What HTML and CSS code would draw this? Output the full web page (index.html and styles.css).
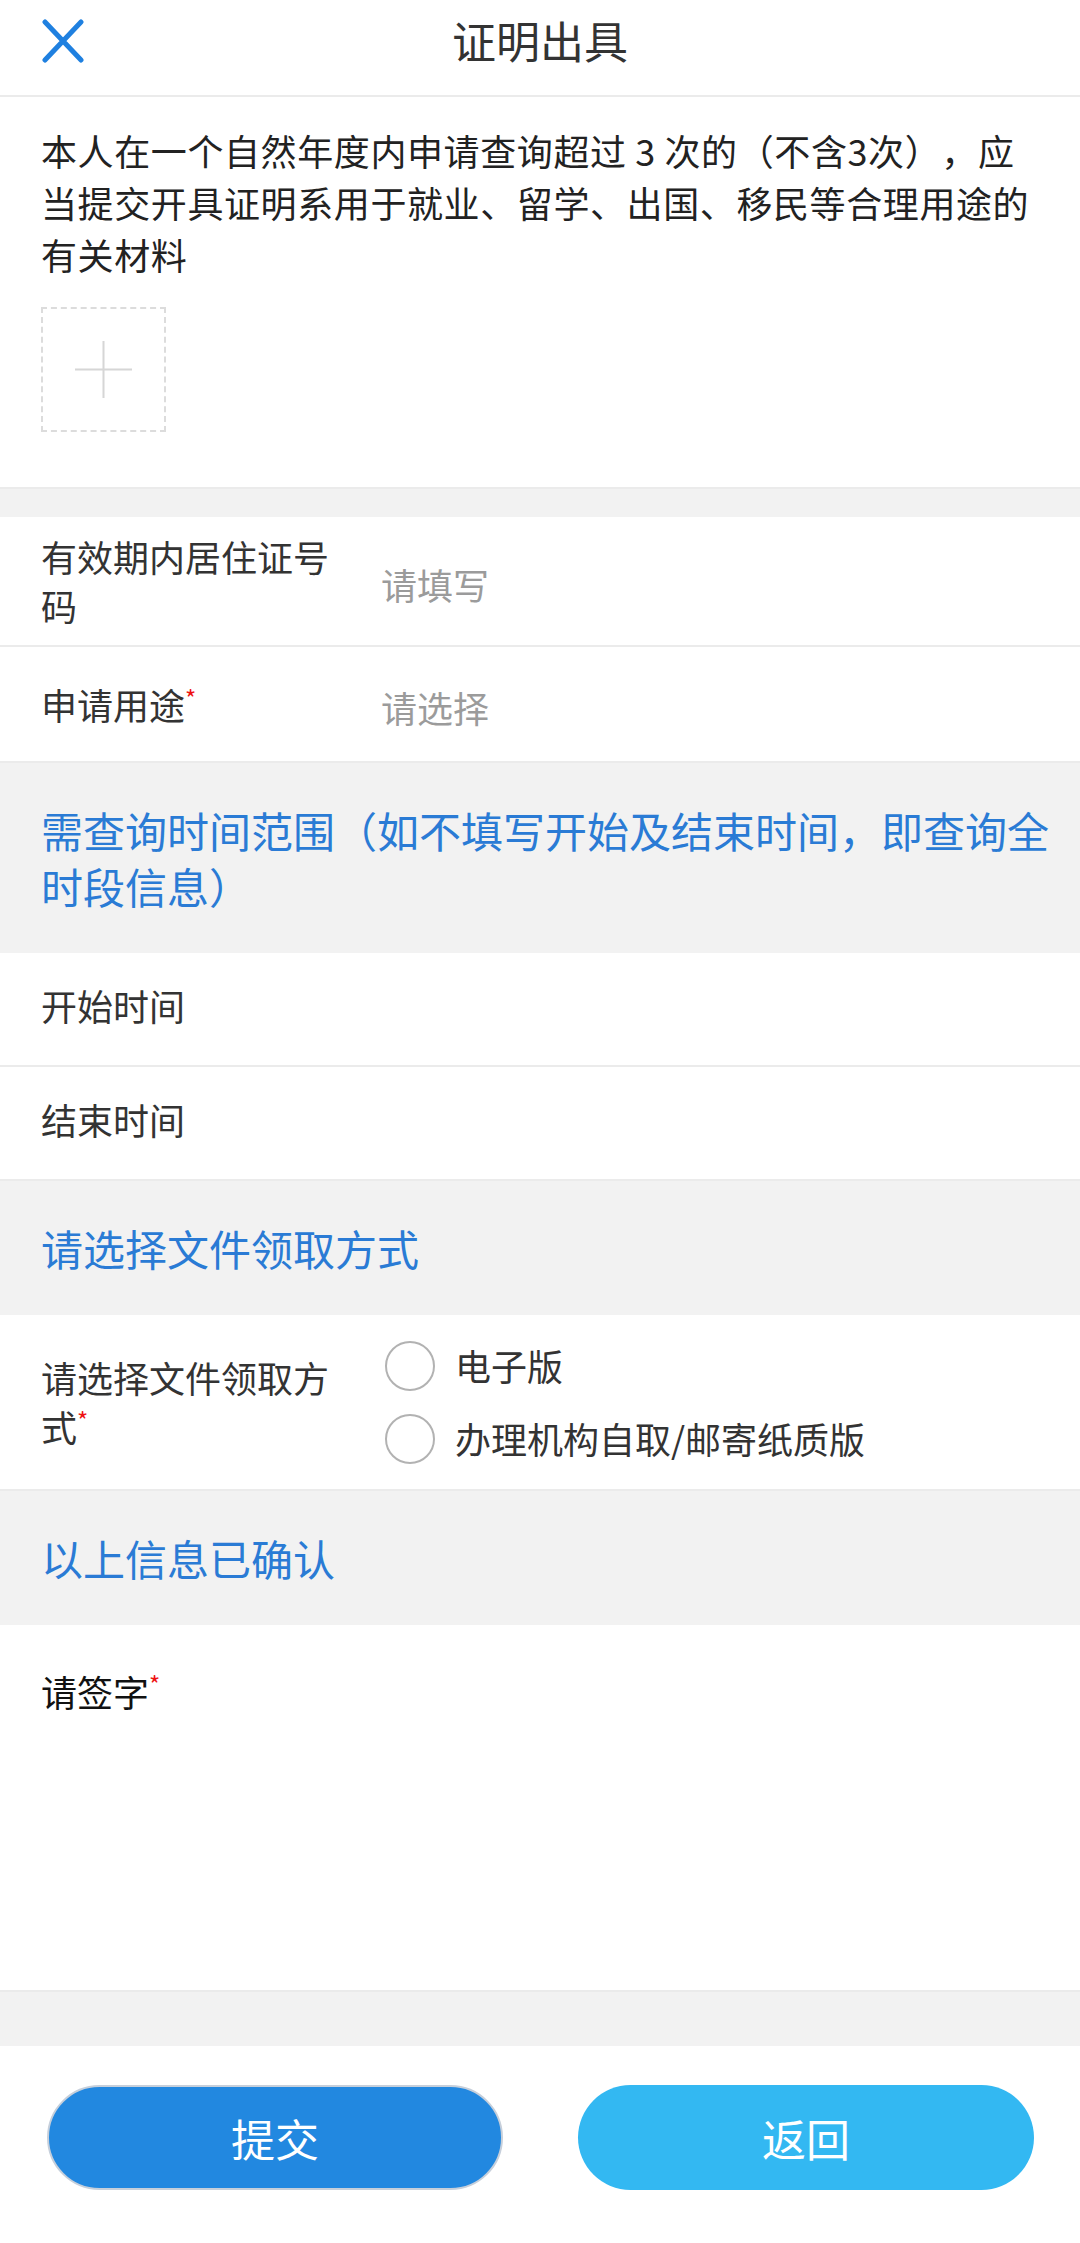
FILE: index.html
```html
<!DOCTYPE html>
<html lang="zh-CN">
<head>
  <meta charset="UTF-8">
  <title>证明出具</title>
  <link rel="stylesheet" href="styles.css">
</head>
<body>

  <header class="top-bar">
    <a class="close-btn" href="javascript:void(0)">
      <svg width="42" height="44" viewBox="0 0 42 44">
        <path d="M3 3 L39 41 M39 3 L3 41" stroke="#1f80e0" stroke-width="5" stroke-linecap="round" fill="none"/>
      </svg>
    </a>
    <h1>证明出具</h1>
  </header>

  <div class="intro">
    <p>本人在一个自然年度内申请查询超过 3 次的（不含3次），应当提交开具证明系用于就业、留学、出国、移民等合理用途的有关材料</p>
    <div class="upload-box">
      <svg width="57" height="57" viewBox="0 0 57 57">
        <path d="M28.5 0 V57 M0 28.5 H57" stroke="#d6d6d6" stroke-width="2" fill="none"/>
      </svg>
    </div>
  </div>

  <div class="spacer small"></div>

  <div class="row row-id">
    <div class="label">有效期内居住证号码</div>
    <div class="value placeholder">请填写</div>
  </div>
  <div class="row row-use">
    <div class="label">申请用途<span class="req">*</span></div>
    <div class="value placeholder">请选择</div>
  </div>

  <div class="group-title">需查询时间范围（如不填写开始及结束时间，即查询全时段信息）</div>

  <div class="row row-time">
    <div class="label">开始时间</div>
  </div>
  <div class="row row-time">
    <div class="label">结束时间</div>
  </div>

  <div class="group-title">请选择文件领取方式</div>

  <div class="row row-radio">
    <div class="label">请选择文件领取方式<span class="req">*</span></div>
    <div class="value options">
      <label class="option"><span class="circle"></span>电子版</label>
      <label class="option"><span class="circle"></span>办理机构自取/邮寄纸质版</label>
    </div>
  </div>

  <div class="group-title">以上信息已确认</div>

  <div class="sign-area">
    <div class="sign-label">请签字<span class="req">*</span></div>
  </div>

  <div class="spacer"></div>

  <footer class="actions">
    <button class="btn btn-submit">提交</button>
    <button class="btn btn-back">返回</button>
  </footer>

</body>
</html>
```

FILE: styles.css
```css
body {
  margin: 0;
  background-color: #ffffff;
  font-family: "Noto Sans CJK SC", "Noto Sans", sans-serif;
  color: #333;
  text-spacing-trim: space-all;
}

.top-bar {
  position: relative;
  height: 97px;
  box-sizing: border-box;
  padding-bottom: 15px;
  border-bottom: 2px solid #ebebeb;
  display: flex;
  align-items: center;
  justify-content: center;
}

.close-btn {
  position: absolute;
  left: 42px;
  top: 19px;
  display: block;
  line-height: 0;
}

.top-bar h1 {
  margin: 0;
  font-size: 44px;
  font-weight: normal;
  line-height: 82px;
  color: #333;
}

.intro {
  padding: 27px 41px 55px;
  border-bottom: 2px solid #ebebeb;
}

.intro p {
  margin: 0;
  font-size: 36px;
  line-height: 52px;
  letter-spacing: 0.6px;
  color: #222;
}

.upload-box {
  margin-top: 27px;
  width: 125px;
  height: 125px;
  box-sizing: border-box;
  border: 2px dashed #dcdcdc;
  display: flex;
  align-items: center;
  justify-content: center;
}

.spacer {
  height: 54px;
  background-color: #f2f2f2;
}

.spacer.small {
  height: 28px;
}

.row {
  display: flex;
  align-items: center;
  box-sizing: border-box;
  padding: 14px 0 14px 41px;
  border-bottom: 2px solid #ebebeb;
  background-color: #fff;
}

.row-id { min-height: 130px; }
.row-use { min-height: 116px; }
.row-time { min-height: 114px; padding-bottom: 22px; }
.row-radio { min-height: 175px; }

.label {
  flex: 0 0 340px;
  box-sizing: border-box;
  padding-right: 30px;
  font-size: 36px;
  line-height: 49px;
  color: #333;
}

.value {
  flex: 1;
  font-size: 36px;
  line-height: 49px;
}

.placeholder {
  color: #9b9b9b;
  padding-top: 6px;
}

.req {
  position: relative;
  top: 6px;
  color: #ee1111;
  font-size: 24px;
  line-height: 24px;
  vertical-align: top;
}

.group-title {
  background-color: #f2f2f2;
  color: #2a7bd5;
  font-size: 42px;
  line-height: 56px;
  padding: 39px 20px 39px 41px;
}

.options {
  display: flex;
  flex-direction: column;
  padding-left: 4px;
}

.option {
  display: flex;
  align-items: center;
  height: 73px;
  color: #333;
}

.circle {
  width: 50px;
  height: 50px;
  box-sizing: border-box;
  border: 2px solid #b2b2b2;
  border-radius: 50%;
  margin-right: 20px;
}

.sign-area {
  height: 367px;
  box-sizing: border-box;
  padding: 41px 41px 0;
  border-bottom: 2px solid #ebebeb;
}

.sign-label {
  font-size: 36px;
  line-height: 50px;
  color: #111;
}

.actions {
  height: 195px;
  box-sizing: border-box;
  padding: 39px 46px 0 47px;
  display: flex;
  justify-content: space-between;
  align-items: flex-start;
}

.btn {
  width: 456px;
  height: 105px;
  border-radius: 53px;
  border: none;
  color: #fff;
  font-family: "Noto Sans CJK SC", sans-serif;
  font-size: 44px;
  cursor: pointer;
}

.btn-submit {
  background-color: #2288e0;
  border: 2px solid #c6cfdb;
}

.btn-back {
  background-color: #33b8f2;
}
```
